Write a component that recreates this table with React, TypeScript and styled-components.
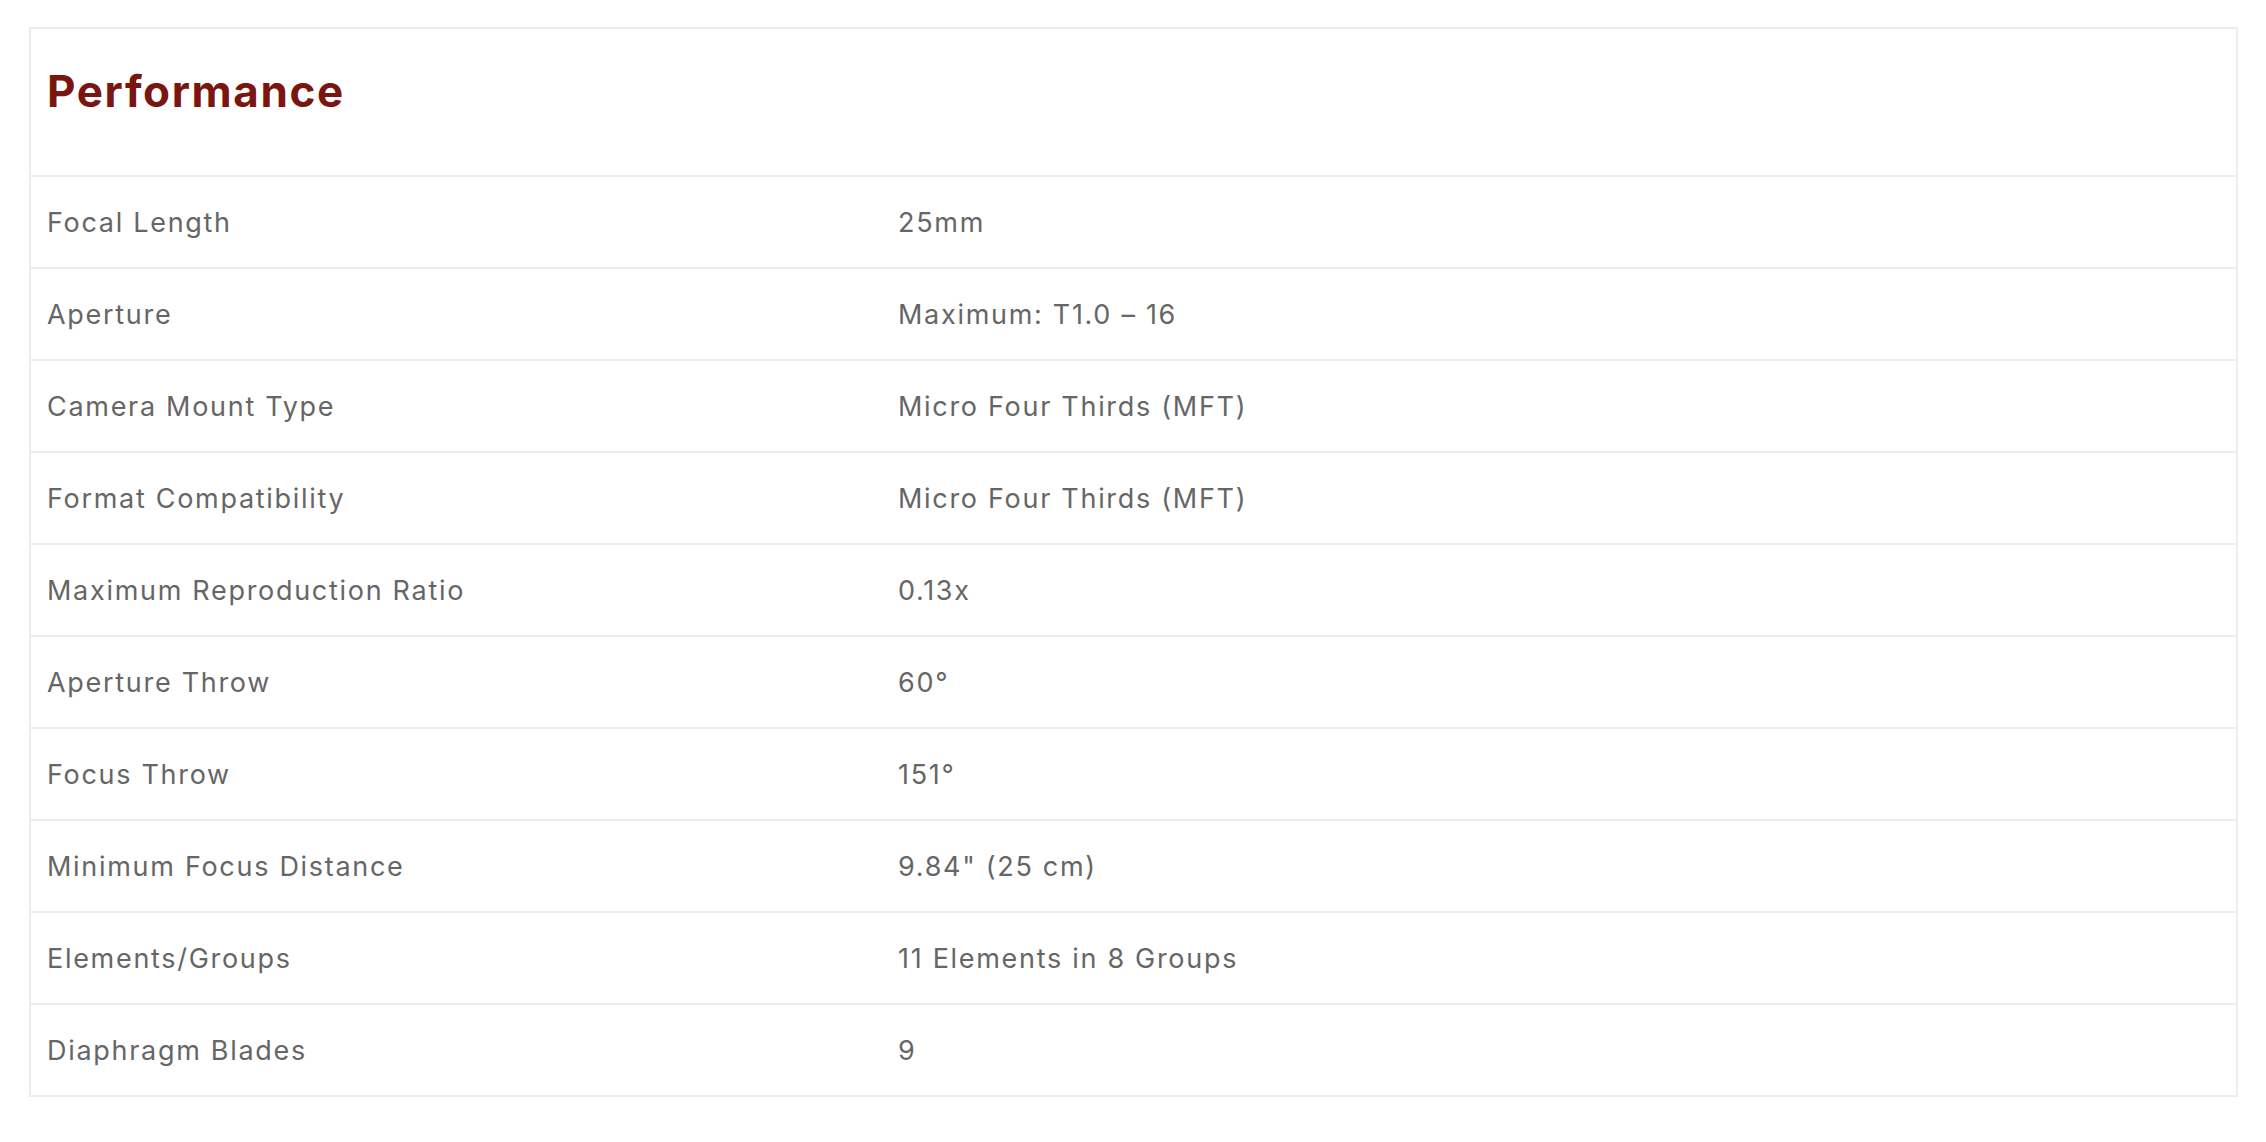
import React from 'react'
import styled, { createGlobalStyle } from 'styled-components'

const GlobalStyle = createGlobalStyle`
  html, body {
    margin: 0;
    padding: 0;
    background: #fff;
  }
`

const Page = styled.div`
  padding: 27px 28px 0 29px;
  font-family: Inter, "Noto Sans", sans-serif;
`

const Table = styled.div`
  border: 2px solid #ececec;
  border-bottom: none;
`

const TitleRow = styled.div`
  padding: 35px 16px 57px;
  border-bottom: 2px solid #ececec;
`

const Title = styled.h2`
  margin: 0;
  font-size: 44px;
  line-height: 54px;
  font-weight: 700;
  letter-spacing: 1.6px;
  color: #7a1510;
`

const Row = styled.div`
  display: grid;
  grid-template-columns: 851px 1fr;
  height: 90px;
  align-items: center;
  border-bottom: 2px solid #ececec;
`

const Cell = styled.div`
  padding: 0 16px;
  font-size: 27px;
  letter-spacing: 1.7px;
  color: #666;
`

const specs: [string, string][] = [
  ['Focal Length', '25mm'],
  ['Aperture', 'Maximum: T1.0 – 16'],
  ['Camera Mount Type', 'Micro Four Thirds (MFT)'],
  ['Format Compatibility', 'Micro Four Thirds (MFT)'],
  ['Maximum Reproduction Ratio', '0.13x'],
  ['Aperture Throw', '60°'],
  ['Focus Throw', '151°'],
  ['Minimum Focus Distance', '9.84" (25 cm)'],
  ['Elements/Groups', '11 Elements in 8 Groups'],
  ['Diaphragm Blades', '9'],
]

export default function App() {
  return (
    <>
      <GlobalStyle />
      <Page>
        <Table>
          <TitleRow>
            <Title>Performance</Title>
          </TitleRow>
          {specs.map(([label, value]) => (
            <Row key={label}>
              <Cell>{label}</Cell>
              <Cell>{value}</Cell>
            </Row>
          ))}
        </Table>
      </Page>
    </>
  )
}
